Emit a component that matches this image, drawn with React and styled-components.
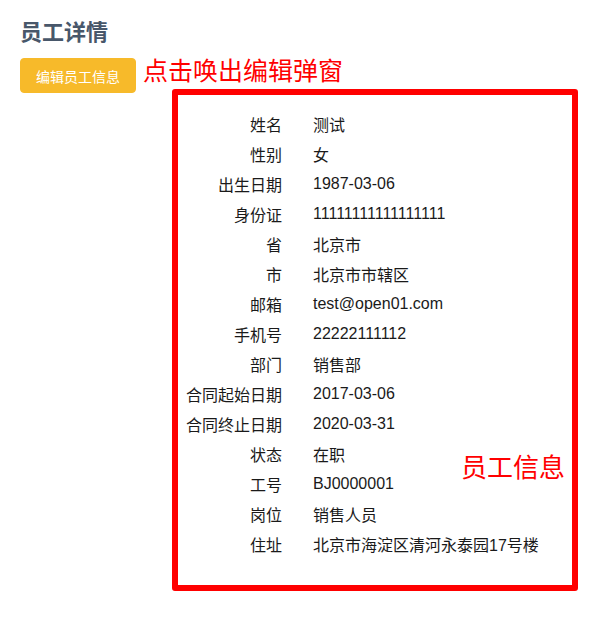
import React from "react";
import styled, { createGlobalStyle } from "styled-components";

const rows = [
  ["姓名", "测试"],
  ["性别", "女"],
  ["出生日期", "1987-03-06"],
  ["身份证", "11111111111111111"],
  ["省", "北京市"],
  ["市", "北京市市辖区"],
  ["邮箱", "test@open01.com"],
  ["手机号", "22222111112"],
  ["部门", "销售部"],
  ["合同起始日期", "2017-03-06"],
  ["合同终止日期", "2020-03-31"],
  ["状态", "在职"],
  ["工号", "BJ0000001"],
  ["岗位", "销售人员"],
  ["住址", "北京市海淀区清河永泰园17号楼"],
];

function App() {
  return (
    <>
      <GlobalStyle />
      <Page>
        <Title>员工详情</Title>
        <Toolbar>
          <EditButton>编辑员工信息</EditButton>
          <Note>点击唤出编辑弹窗</Note>
        </Toolbar>
        <Details>
          {rows.map(([label, value]) => (
            <React.Fragment key={label}>
              <Label>{label}</Label>
              <Value>{value}</Value>
            </React.Fragment>
          ))}
        </Details>
        <HighlightBox />
        <BoxNote>员工信息</BoxNote>
      </Page>
    </>
  );
}

const GlobalStyle = createGlobalStyle`
  body {
    margin: 0;
    background: #fff;
    font-family: "Liberation Sans", Arial, "Noto Sans CJK SC", sans-serif;
  }
`;

const Page = styled.div`
  position: relative;
  padding: 20px;
  min-height: 587px;
`;

const Title = styled.h2`
  margin: 0;
  font-size: 22px;
  line-height: 26px;
  font-weight: bold;
  color: #48576a;
`;

const Toolbar = styled.div`
  display: flex;
  align-items: flex-start;
  gap: 7px;
  margin-top: 12px;
`;

const EditButton = styled.button`
  width: 116px;
  height: 35px;
  padding: 0;
  border: 1px solid #f7ba2a;
  border-radius: 4px;
  background: #f7ba2a;
  color: #fff;
  font-family: inherit;
  font-size: 14px;
`;

const Note = styled.span`
  font-size: 25px;
  line-height: 26px;
  color: #ff0000;
`;

const Details = styled.div`
  display: grid;
  grid-template-columns: 120px auto;
  column-gap: 31px;
  grid-auto-rows: 30px;
  align-items: center;
  margin-top: 16px;
  padding-left: 142px;
  font-size: 16px;
  color: #1a1a1a;
`;

const Label = styled.div`
  text-align: right;
`;

const Value = styled.div``;

const HighlightBox = styled.div`
  position: absolute;
  left: 172px;
  top: 89px;
  width: 406px;
  height: 502px;
  box-sizing: border-box;
  border: 6px solid #ff0000;
  border-radius: 3px;
  pointer-events: none;
`;

const BoxNote = styled.span`
  position: absolute;
  left: 461px;
  top: 453px;
  font-size: 26px;
  line-height: 30px;
  color: #ff0000;
`;

export default App;
